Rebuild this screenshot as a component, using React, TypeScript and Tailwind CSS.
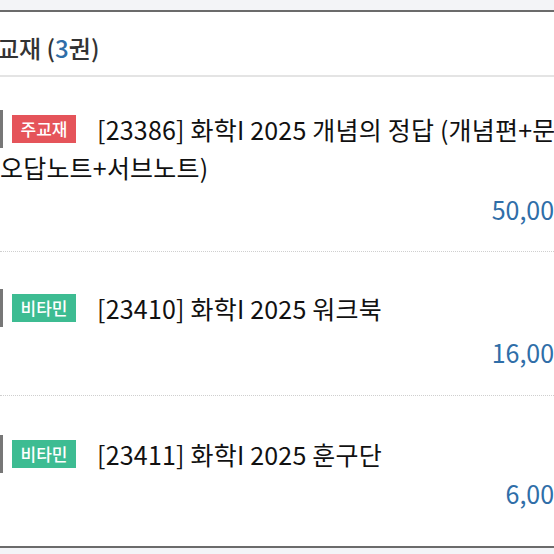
import React from "react";

const font = { fontFamily: '"Noto Sans CJK KR", "Noto Sans", sans-serif' };

function Item({
  badge,
  badgeColor,
  lines,
  price,
  pt,
  gap,
  pb,
  last,
}: {
  badge: string;
  badgeColor: string;
  lines: string[];
  price: string;
  pt: string;
  gap: string;
  pb: string;
  last?: boolean;
}) {
  return (
    <div className={`${pt} ${pb} ${last ? "" : "border-b border-dotted border-[#cfcfcf]"}`}>
      <p className="text-[25px] leading-[38px] text-[#111] whitespace-nowrap tracking-[0.2px]">
        <span className="inline-block w-[3px] h-[38px] bg-[#777] align-top" />
        <span
          className={`inline-block ml-[9px] mt-[5px] w-[64px] h-[28px] leading-[28px] text-center text-[17px] font-medium text-white align-top tracking-normal ${badgeColor}`}
        >
          {badge}
        </span>
        <span className="ml-[21px]">{lines[0]}</span>
        {lines.slice(1).map((l, i) => (
          <React.Fragment key={i}>
            <br />
            <span>{l}</span>
          </React.Fragment>
        ))}
      </p>
      <div className={`${gap} text-right pr-[49px] text-[25px] leading-[30px] text-[#2f6ea8]`}>
        {price}
      </div>
    </div>
  );
}

export default function App() {
  return (
    <div className="w-[554px] h-[554px] overflow-hidden bg-[#f3f4f7]" style={font}>
      <div className="mt-[10px] w-[640px] bg-white border-t-2 border-b-2 border-t-[#6b6b6b] border-b-[#6b6b6b]">
        <div className="h-[65px] pt-[8px] flex items-center border-b-2 border-[#e4e4e4]">
          <span className="-ml-[3px] text-[24px] font-medium text-[#333]">
            교재 (<span className="text-[#2f6ea8]">3</span>권)
          </span>
        </div>
        <Item
          badge="주교재"
          badgeColor="bg-[#e5545a]"
          lines={["[23386] 화학I 2025 개념의 정답 (개념편+문제편+", "오답노트+서브노트)"]}
          price="50,000원"
          pt="pt-[33px]"
          gap="mt-[8px]"
          pb="pb-[27px]"
        />
        <Item
          badge="비타민"
          badgeColor="bg-[#3dbc92]"
          lines={["[23410] 화학I 2025 워크북"]}
          price="16,000원"
          pt="pt-[37px]"
          gap="mt-[10px]"
          pb="pb-[28px]"
        />
        <Item
          badge="비타민"
          badgeColor="bg-[#3dbc92]"
          lines={["[23411] 화학I 2025 훈구단"]}
          price="6,000원"
          pt="pt-[39px]"
          gap="mt-[5px]"
          pb="pb-[38px]"
          last
        />
      </div>
    </div>
  );
}
